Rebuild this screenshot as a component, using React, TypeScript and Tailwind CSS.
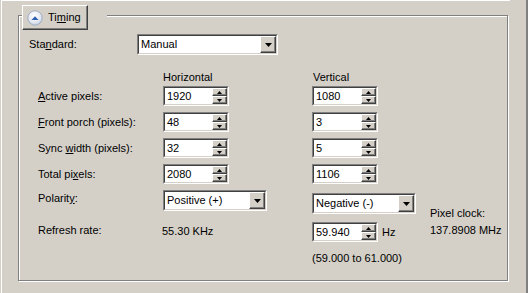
import React from 'react';

const face = 'bg-[#d4d0c8]';

function SpinArrow({ up }: { up?: boolean }) {
  return (
    <div className="flex-1 flex items-center justify-center border border-t-white border-l-white border-r-[#404040] border-b-[#404040] bg-[#d4d0c8] shadow-[inset_-1px_-1px_0_#808080]">
      <svg width="5" height="3" viewBox="0 0 5 3">
        {up ? <polygon points="0,3 5,3 2.5,0" fill="#000" /> : <polygon points="0,0 5,0 2.5,3" fill="#000" />}
      </svg>
    </div>
  );
}

function SpinBox({ value }: { value: string }) {
  return (
    <div className="w-[66px] h-5 border border-t-[#808080] border-l-[#808080] border-r-white border-b-white">
      <div className="h-full flex border border-t-[#404040] border-l-[#404040] border-r-[#d4d0c8] border-b-[#d4d0c8] bg-white">
        <div className="flex-1 pl-[2px] leading-[16px]">{value}</div>
        <div className="w-[15px] flex flex-col">
          <SpinArrow up />
          <SpinArrow />
        </div>
      </div>
    </div>
  );
}

function Combo({ value, width }: { value: string; width: string }) {
  return (
    <div className={`${width} h-[21px] border border-t-[#808080] border-l-[#808080] border-r-white border-b-white`}>
      <div className="h-full flex border border-t-[#404040] border-l-[#404040] border-r-[#d4d0c8] border-b-[#d4d0c8] bg-white">
        <div className="flex-1 pl-[2px] leading-[17px]">{value}</div>
        <div className="w-4 flex items-center justify-center border border-t-white border-l-white border-r-[#404040] border-b-[#404040] bg-[#d4d0c8] shadow-[inset_-1px_-1px_0_#808080]">
          <svg width="7" height="4" viewBox="0 0 7 4">
            <polygon points="0,0 7,0 3.5,4" fill="#000" />
          </svg>
        </div>
      </div>
    </div>
  );
}

function Row({ label, h, v }: { label: React.ReactNode; h: string; v: string }) {
  return (
    <div className="flex items-center h-5">
      <div className="w-[125px] pl-[9px] -ml-[9px] box-content">{label}</div>
      <SpinBox value={h} />
      <div className="w-[83px]" />
      <SpinBox value={v} />
    </div>
  );
}

export default function App() {
  return (
    <div
      className={`w-[528px] h-[293px] ${face} pl-px overflow-hidden text-[11px] leading-[13px] text-black`}
      style={{ fontFamily: '"Liberation Sans", Arial, sans-serif' }}
    >
      <div className="h-full border-l border-l-white border-r-2 border-r-[#808080] flex flex-col">
        <div className="h-px w-[508px] bg-white" />
        <div className="relative ml-[16px] mt-[14px] w-[490px] h-[266px] border border-[#808080] shadow-[inset_1px_1px_0_#fff,1px_1px_0_#fff]">
          {/* legend button over the frame */}
          <div className={`absolute left-[3px] top-[-11px] w-[85px] h-[25px] ${face}`}>
            <div className="w-[66px] h-[25px] flex items-center border border-t-white border-l-white border-r-[#404040] border-b-[#404040] shadow-[inset_-1px_-1px_0_#808080]">
              <svg width="16" height="16" viewBox="0 0 16 16" className="ml-[4px]">
                <defs>
                  <radialGradient id="g" cx="0.45" cy="0.35" r="0.7">
                    <stop offset="0" stopColor="#ffffff" />
                    <stop offset="0.6" stopColor="#e6ebf3" />
                    <stop offset="1" stopColor="#b9c6dc" />
                  </radialGradient>
                </defs>
                <circle cx="8" cy="8" r="7.2" fill="url(#g)" stroke="#9aa9c2" strokeWidth="0.9" />
                <polygon points="4.5,10 11.5,10 8,6.2" fill="#2f5fb3" />
              </svg>
              <span className="ml-[5px]">
                Ti<u>m</u>ing
              </span>
            </div>
          </div>

          <div className="pt-[18px] pl-[10px]">
            <div className="flex items-center h-[21px]">
              <div className="w-[108px]">
                Sta<u>n</u>dard:
              </div>
              <Combo value="Manual" width="w-[141px]" />
            </div>

            <div className="flex h-[13px] mt-[16px]">
              <div className="w-[134px]" />
              <div className="w-[150px]">Horizontal</div>
              <div>Vertical</div>
            </div>

            <div className="mt-[2px] pl-[9px] flex flex-col gap-[6px]">
              <Row label={<><u>A</u>ctive pixels:</>} h="1920" v="1080" />
              <Row label={<><u>F</u>ront porch (pixels):</>} h="48" v="3" />
              <Row label={<>Sync <u>w</u>idth (pixels):</>} h="32" v="5" />
              <Row label={<>Total pi<u>x</u>els:</>} h="2080" v="1106" />
            </div>

            <div className="mt-[6px] pl-[9px] grid grid-cols-[125px_149px_118px_auto] grid-rows-[32px_29px_auto]">
              <div className="mt-[2px]">
                Polarit<u>y</u>:
              </div>
              <Combo value="Positive (+)" width="w-[104px]" />
              <div className="mt-[3px]">
                <Combo value="Negative (-)" width="w-[104px]" />
              </div>
              <div className="row-span-2 mt-[17px] flex flex-col gap-[4px]">
                <div>Pixel clock:</div>
                <div>137.8908 MHz</div>
              </div>

              <div className="mt-[2px]">Refresh rate:</div>
              <div className="mt-[3px] -ml-px">55.30 KHz</div>
              <div className="flex items-start">
                <SpinBox value="59.940" />
                <div className="ml-[4px] mt-[4px]">Hz</div>
              </div>

              <div />
              <div />
              <div className="mt-[1px]">(59.000 to 61.000)</div>
            </div>
          </div>
        </div>
      </div>
    </div>
  );
}
